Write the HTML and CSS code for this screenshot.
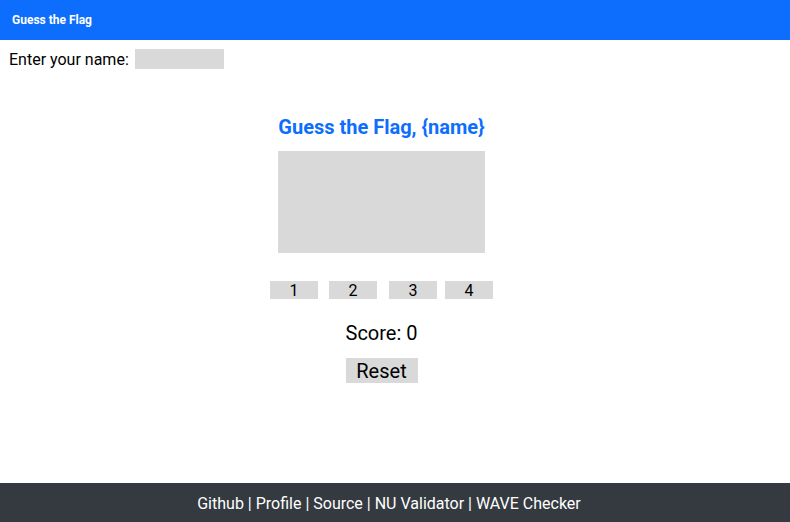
FILE: index.html
```html
<!DOCTYPE html>
<html lang="en">
<head>
<meta charset="utf-8">
<title>Guess the Flag</title>
<link rel="stylesheet" href="styles.css">
</head>
<body>
<header class="topbar"><span class="brand">Guess the Flag</span></header>
<div class="name-row">
  <label for="name">Enter your name:</label>
  <span class="name-input" id="name"></span>
</div>
<main class="game">
  <h1 class="title">Guess the Flag, {name}</h1>
  <div class="flag"></div>
  <div class="choices">
    <span class="choice">1</span>
    <span class="choice">2</span>
    <span class="choice">3</span>
    <span class="choice">4</span>
  </div>
  <p class="score">Score: 0</p>
  <span class="reset">Reset</span>
</main>
<footer class="footer">Github | Profile | Source | NU Validator | WAVE Checker</footer>
</body>
</html>
```

FILE: styles.css
```css
html, body { margin: 0; padding: 0; }
body {
  font-family: Roboto, "Liberation Sans", sans-serif;
  color: #000;
  background: #fff;
  width: 790px;
  height: 522px;
  display: flex;
  flex-direction: column;
}
.topbar {
  height: 40px;
  background: #0d6efd;
  display: flex;
  align-items: center;
  padding-left: 12px;
}
.brand {
  color: #fff;
  font-weight: 700;
  font-size: 12px;
}
.name-row {
  display: flex;
  align-items: center;
  padding: 9px 0 0 9px;
  font-size: 16px;
  gap: 6px;
}
.name-input {
  display: inline-block;
  width: 89px;
  height: 20px;
  background: #d9d9d9;
}
.game {
  flex: 1;
  display: flex;
  flex-direction: column;
  align-items: center;
  padding-right: 27px;
}
.title {
  margin: 46px 0 0;
  font-size: 20px;
  font-weight: 700;
  color: #0d6efd;
  line-height: 24px;
}
.flag {
  margin-top: 12px;
  width: 207px;
  height: 102px;
  background: #d9d9d9;
}
.choices {
  margin-top: 28px;
  display: flex;
}
.choice {
  width: 48px;
  height: 18px;
  line-height: 20px;
  background: #d9d9d9;
  text-align: center;
  font-size: 16px;
}
.choice:nth-child(2) { margin-left: 11px; }
.choice:nth-child(3) { margin-left: 12px; }
.choice:nth-child(4) { margin-left: 8px; }
.score {
  margin: 22px 0 0;
  font-size: 20px;
  line-height: 24px;
}
.reset {
  margin-top: 13px;
  width: 72px;
  height: 25px;
  line-height: 27px;
  background: #d9d9d9;
  text-align: center;
  font-size: 20px;
}
.footer {
  height: 39px;
  box-sizing: border-box;
  padding: 2px 12px 0 0;
  background: #343a40;
  color: #fff;
  font-size: 16px;
  display: flex;
  align-items: center;
  justify-content: center;
}
```
